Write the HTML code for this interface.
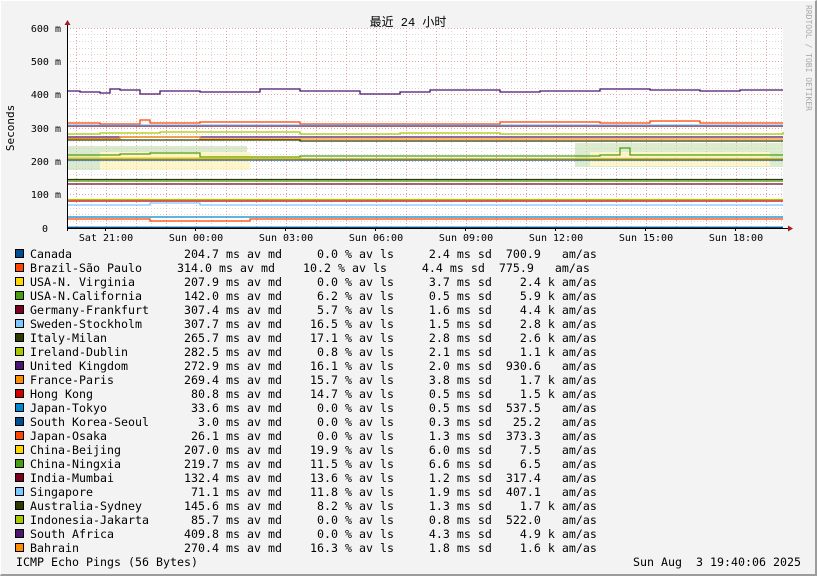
<!DOCTYPE html>
<html><head><meta charset="utf-8"><style>
html,body{margin:0;padding:0}
body{width:817px;height:576px;position:relative;background:#f3f3f3;overflow:hidden;font-family:"DejaVu Sans Mono","Liberation Mono",monospace;color:#000}
.fr{position:absolute;left:0;top:0;border-top:1px solid #fff;border-left:1px solid #fff;border-right:2px solid #9c9c9c;border-bottom:2px solid #9c9c9c;box-sizing:border-box;width:817px;height:576px}
pre{position:absolute;left:30px;top:247px;margin:0;font-family:"DejaVu Sans Mono",monospace;font-size:11.63px;line-height:14px;white-space:pre}
.b{position:absolute;left:15px;width:7px;height:7px;border:1px solid #000}
.t{position:absolute;font-size:11.63px;white-space:pre}
</style></head><body>
<div class="fr"></div>
<svg width="817" height="576" style="position:absolute;left:0;top:0" font-family="DejaVu Sans Mono, monospace">
<rect x="67" y="28" width="716" height="200" fill="#fff"/>
<g stroke="#d8d8d8" stroke-width="1" stroke-dasharray="1,2">
<path d="M67 34.5H783M67 41.5H783M67 48.5H783M67 54.5H783M67 68.5H783M67 74.5H783M67 81.5H783M67 88.5H783M67 101.5H783M67 108.5H783M67 114.5H783M67 121.5H783M67 134.5H783M67 141.5H783M67 148.5H783M67 154.5H783M67 168.5H783M67 174.5H783M67 181.5H783M67 188.5H783M67 201.5H783M67 208.5H783M67 214.5H783M67 221.5H783"/>
<path d="M91.5 28V228M121.5 28V228M151.5 28V228M181.5 28V228M211.5 28V228M241.5 28V228M271.5 28V228M301.5 28V228M331.5 28V228M361.5 28V228M391.5 28V228M421.5 28V228M451.5 28V228M481.5 28V228M511.5 28V228M541.5 28V228M571.5 28V228M601.5 28V228M631.5 28V228M661.5 28V228M691.5 28V228M721.5 28V228M751.5 28V228M781.5 28V228"/>
</g>
<g stroke="#e8a0a0" stroke-width="1" stroke-dasharray="1,2">
<path d="M67 28.5H783M67 61.5H783M67 94.5H783M67 128.5H783M67 161.5H783M67 194.5H783"/>
<path d="M76.5 28V228M106.5 28V228M136.5 28V228M166.5 28V228M196.5 28V228M226.5 28V228M256.5 28V228M286.5 28V228M316.5 28V228M346.5 28V228M376.5 28V228M406.5 28V228M436.5 28V228M466.5 28V228M496.5 28V228M526.5 28V228M556.5 28V228M586.5 28V228M616.5 28V228M646.5 28V228M676.5 28V228M706.5 28V228M736.5 28V228M766.5 28V228"/>
</g>
<g opacity="0.6">
<rect x="67" y="146" width="180" height="24" fill="#c4dcae"/>
<rect x="100" y="152" width="150" height="18" fill="#fff0a8"/>
<rect x="575" y="143" width="208" height="24" fill="#c8e0b0"/>
<rect x="590" y="152" width="180" height="14" fill="#fff0a8"/>
</g>
<g fill="none" stroke-width="1.3">
<path d="M67 91H80V92H100V93H110V89H120V90H140V94H160V91H200V92H260V89H300V91H360V94H400V92H430V90H500V92H540V91H600V89H650V90H700V91H740V90H783" stroke="#4b1670"/>
<path d="M67 123H100V124H140V120H150V123H200V122H280V122H300V124H400V124H500V122H600V123H650V121H700V123H783" stroke="#ff4500"/>
<path d="M67 126H783" stroke="#7b0020"/>
<path d="M67 125H783" stroke="#7cc8ff"/>
<path d="M67 134H100V133H160V132H300V134H400V133H500V134H783V132" stroke="#a9c800"/>
<path d="M67 137H783" stroke="#4b1670"/>
<path d="M67 138.5H120V137H200V139H783" stroke="#ff8c00"/>
<path d="M67 140H300V141H783" stroke="#2d3b00"/>
<path d="M67 155H120V154H150V153H200V157H300V156H600V155H620V148H630V155H783" stroke="#4b9e14"/>
<path d="M67 158H300V160H783" stroke="#ffd700"/>
<path d="M67 160H783" stroke="#004d8f"/>
<path d="M67 158.5H783" stroke="#e6c200"/>
<path d="M67 179.5H783" stroke="#2d3b00"/>
<path d="M67 181H783" stroke="#4b9e14"/>
<path d="M67 184H783" stroke="#7b0020"/>
<path d="M67 199.5H783" stroke="#a9c800"/>
<path d="M67 201H783" stroke="#cc0000"/>
<path d="M67 205H150V203H200V205H783" stroke="#7cc8ff"/>
<path d="M67 217H783" stroke="#0088cc"/>
<path d="M67 219H150V221H250V219H783" stroke="#ff4500"/>
<path d="M67 227.3H783" stroke="#004d8f"/>
</g>
<path d="M67 228.5H788M67.5 22V231" stroke="#000" stroke-width="1"/>
<path d="M788 225.5L793 228.5L788 231.5Z" fill="#a02020"/>
<path d="M64.5 25L67.5 20L70.5 25Z" fill="#a02020"/>
<g stroke="#000"><path d="M105.5 228V231M195.5 228V231M285.5 228V231M375.5 228V231M465.5 228V231M555.5 228V231M645.5 228V231M735.5 228V231"/></g>
<g font-size="10" text-anchor="end">
<text x="61" y="32">600 m</text><text x="61" y="65">500 m</text><text x="61" y="98">400 m</text><text x="61" y="132">300 m</text><text x="61" y="165">200 m</text><text x="61" y="198">100 m</text><text x="48" y="232">0</text>
</g>
<g font-size="10" text-anchor="middle">
<text x="106" y="241">Sat 21:00</text><text x="196" y="241">Sun 00:00</text><text x="286" y="241">Sun 03:00</text><text x="376" y="241">Sun 06:00</text><text x="466" y="241">Sun 09:00</text><text x="556" y="241">Sun 12:00</text><text x="646" y="241">Sun 15:00</text><text x="736" y="241">Sun 18:00</text>
</g>
<text x="408" y="26" font-size="12" text-anchor="middle" font-family="Liberation Mono, Noto Sans CJK SC, monospace">最近 24 小时</text>
<text transform="translate(14,128) rotate(-90)" font-size="11" text-anchor="middle">Seconds</text>
<text transform="translate(806,5) rotate(90)" font-size="8" fill="#aaa">RRDTOOL / TOBI OETIKER</text>
</svg>
<div class="b" style="top:249px;background:#004d8f"></div>
<div class="b" style="top:263px;background:#ff4500"></div>
<div class="b" style="top:277px;background:#ffd700"></div>
<div class="b" style="top:291px;background:#4b9e14"></div>
<div class="b" style="top:305px;background:#7b0020"></div>
<div class="b" style="top:319px;background:#7cc8ff"></div>
<div class="b" style="top:333px;background:#2d3b00"></div>
<div class="b" style="top:347px;background:#a9c800"></div>
<div class="b" style="top:361px;background:#4b1670"></div>
<div class="b" style="top:375px;background:#ff8c00"></div>
<div class="b" style="top:389px;background:#cc0000"></div>
<div class="b" style="top:403px;background:#0088cc"></div>
<div class="b" style="top:417px;background:#004d8f"></div>
<div class="b" style="top:431px;background:#ff4500"></div>
<div class="b" style="top:445px;background:#ffd700"></div>
<div class="b" style="top:459px;background:#4b9e14"></div>
<div class="b" style="top:473px;background:#7b0020"></div>
<div class="b" style="top:487px;background:#7cc8ff"></div>
<div class="b" style="top:501px;background:#2d3b00"></div>
<div class="b" style="top:515px;background:#a9c800"></div>
<div class="b" style="top:529px;background:#4b1670"></div>
<div class="b" style="top:543px;background:#ff8c00"></div>
<pre>Canada                204.7 ms av md     0.0 % av ls     2.4 ms sd  700.9   am/as
Brazil-São Paulo     314.0 ms av md    10.2 % av ls     4.4 ms sd  775.9   am/as
USA-N. Virginia       207.9 ms av md     0.0 % av ls     3.7 ms sd    2.4 k am/as
USA-N.California      142.0 ms av md     6.2 % av ls     0.5 ms sd    5.9 k am/as
Germany-Frankfurt     307.4 ms av md     5.7 % av ls     1.6 ms sd    4.4 k am/as
Sweden-Stockholm      307.7 ms av md    16.5 % av ls     1.5 ms sd    2.8 k am/as
Italy-Milan           265.7 ms av md    17.1 % av ls     2.8 ms sd    2.6 k am/as
Ireland-Dublin        282.5 ms av md     0.8 % av ls     2.1 ms sd    1.1 k am/as
United Kingdom        272.9 ms av md    16.1 % av ls     2.0 ms sd  930.6   am/as
France-Paris          269.4 ms av md    15.7 % av ls     3.8 ms sd    1.7 k am/as
Hong Kong              80.8 ms av md    14.7 % av ls     0.5 ms sd    1.5 k am/as
Japan-Tokyo            33.6 ms av md     0.0 % av ls     0.5 ms sd  537.5   am/as
South Korea-Seoul       3.0 ms av md     0.0 % av ls     0.3 ms sd   25.2   am/as
Japan-Osaka            26.1 ms av md     0.0 % av ls     1.3 ms sd  373.3   am/as
China-Beijing         207.0 ms av md    19.9 % av ls     6.0 ms sd    7.5   am/as
China-Ningxia         219.7 ms av md    11.5 % av ls     6.6 ms sd    6.5   am/as
India-Mumbai          132.4 ms av md    13.6 % av ls     1.2 ms sd  317.4   am/as
Singapore              71.1 ms av md    11.8 % av ls     1.9 ms sd  407.1   am/as
Australia-Sydney      145.6 ms av md     8.2 % av ls     1.3 ms sd    1.7 k am/as
Indonesia-Jakarta      85.7 ms av md     0.0 % av ls     0.8 ms sd  522.0   am/as
South Africa          409.8 ms av md     0.0 % av ls     4.3 ms sd    4.9 k am/as
Bahrain               270.4 ms av md    16.3 % av ls     1.8 ms sd    1.6 k am/as</pre>
<div class="t" style="left:16px;top:555px">ICMP Echo Pings (56 Bytes)</div>
<div class="t" style="left:633px;top:555px">Sun Aug  3 19:40:06 2025</div>
</body></html>
